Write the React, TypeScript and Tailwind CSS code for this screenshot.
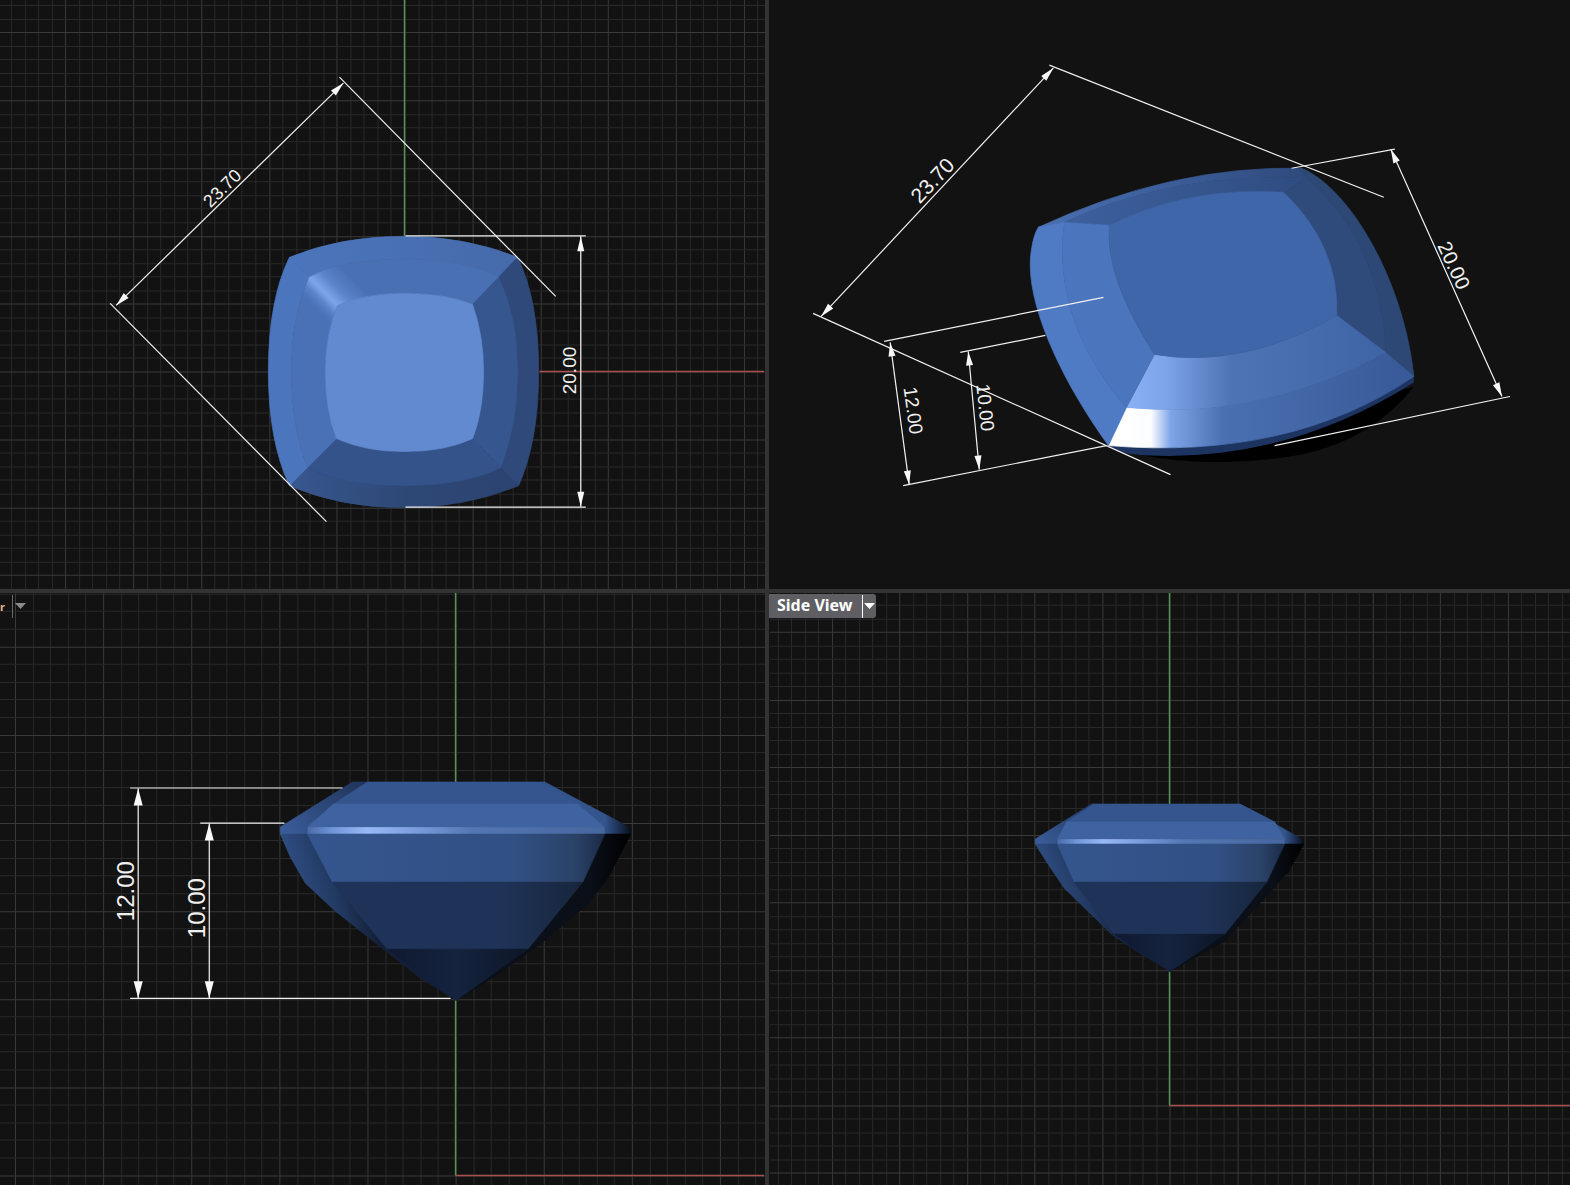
import React from "react";

type P = [number, number];
const pts = (a: P[]) => a.map((p) => p.join(",")).join(" ");
const SCALE = "scale(1.0013)";

function F({ d, fill }: { d: string; fill: string }) {
  return <path d={d} fill={fill} stroke={fill} strokeWidth={0.7} strokeLinejoin="round" />;
}

function Pg({ p, fill }: { p: P[]; fill: string }) {
  return <polygon points={pts(p)} fill={fill} stroke={fill} strokeWidth={0.7} strokeLinejoin="round" />;
}

function Grid({ ox, oy, step, x0, x1, y0, y1 }: { ox: number; oy: number; step: number; x0: number; x1: number; y0: number; y1: number }) {
  const lines: React.ReactNode[] = [];
  const s = Math.ceil((ox - x0) / step);
  for (let i = -s; ox + i * step <= x1; i++) {
    const x = Math.round(ox + i * step) + 0.5;
    lines.push(<line key={"v" + i} x1={x} y1={y0} x2={x} y2={y1} stroke={i % 5 === 0 ? "#3a3a3a" : "#292929"} strokeWidth={1} />);
  }
  const t = Math.ceil((oy - y0) / step);
  for (let j = -t; oy + j * step <= y1; j++) {
    const y = Math.round(oy + j * step) + 0.5;
    lines.push(<line key={"h" + j} x1={x0} y1={y} x2={x1} y2={y} stroke={j % 5 === 0 ? "#3a3a3a" : "#292929"} strokeWidth={1} />);
  }
  return <g>{lines}</g>;
}

function Dim({ a, b, len = 15, w = 8 }: { a: P; b: P; len?: number; w?: number }) {
  const dx = b[0] - a[0];
  const dy = b[1] - a[1];
  const d = Math.hypot(dx, dy);
  const ux = dx / d;
  const uy = dy / d;
  const head = (p: P, s: number): P[] => [
    p,
    [p[0] + s * ux * len - (uy * w) / 2, p[1] + s * uy * len + (ux * w) / 2],
    [p[0] + s * ux * len + (uy * w) / 2, p[1] + s * uy * len - (ux * w) / 2],
  ];
  return (
    <g>
      <line x1={a[0]} y1={a[1]} x2={b[0]} y2={b[1]} stroke="#f2f2f2" strokeWidth={1.2} />
      <polygon points={pts(head(a, 1))} fill="#f8f8f8" />
      <polygon points={pts(head(b, -1))} fill="#f8f8f8" />
    </g>
  );
}

function Ext({ a, b }: { a: P; b: P }) {
  return <line x1={a[0]} y1={a[1]} x2={b[0]} y2={b[1]} stroke="#f0f0f0" strokeWidth={1.2} />;
}

function Label({ x, y, r, size = 18, children }: { x: number; y: number; r: number; size?: number; children: string }) {
  return (
    <text
      transform={`translate(${x} ${y}) rotate(${r})`}
      textAnchor="middle"
      dominantBaseline="central"
      fontSize={size}
      fill="#f0f0f0"
      fontFamily='"Liberation Sans", Arial, sans-serif'
    >
      {children}
    </text>
  );
}

function Stops({ id, x1, y1, x2, y2, stops }: { id: string; x1: number; y1: number; x2: number; y2: number; stops: [number, string][] }) {
  return (
    <linearGradient id={id} gradientUnits="userSpaceOnUse" x1={x1} y1={y1} x2={x2} y2={y2}>
      {stops.map(([o, c]) => (
        <stop key={o} offset={o} stopColor={c} />
      ))}
    </linearGradient>
  );
}

function TopGem() {
  return (
    <g>
      <defs>
        <Stops id="tlRingTop" x1={323} y1={291} x2={344} y2={270} stops={[[0, "#7ea6ea"], [0.4, "#5c84ca"], [1, "#4a70b4"]]} />
        <Stops id="tlRingLeft" x1={323} y1={291} x2={311} y2={303} stops={[[0, "#7ea6ea"], [0.5, "#5a82c8"], [1, "#4a71b6"]]} />
        <Stops id="tlOuterBottom" x1={290} y1={0} x2={518} y2={0} stops={[[0, "#38578f"], [0.5, "#2e4876"], [1, "#2b4370"]]} />
        <Stops id="tlOuterTop" x1={290} y1={0} x2={518} y2={0} stops={[[0, "#4b75bc"], [1, "#466aaa"]]} />
      </defs>
      <F d="M289,257 Q340,236 403,236 Q465,236 517,257 L498,277 Q465,259 403,259 Q340,259 309,277Z" fill="url(#tlOuterTop)" />
      <F d="M517,257 Q538,300 538,371 Q538,440 518,485 L500,467 Q517,425 517,371 Q517,315 498,277Z" fill="#2f4a7a" />
      <F d="M518,485 Q465,507 403,507 Q340,507 289,485 L307,467 Q340,485 403,485 Q465,485 500,467Z" fill="url(#tlOuterBottom)" />
      <F d="M289,485 Q268,440 268,371 Q268,300 289,257 L309,277 Q291,315 291,371 Q291,425 307,467Z" fill="#4b75bc" />
      <F d="M309,277 Q340,259 403,259 Q465,259 498,277 L472,304 Q445,293 403,293 Q365,293 337,305Z" fill="url(#tlRingTop)" />
      <F d="M498,277 Q517,315 517,371 Q517,425 500,467 L472,438 Q483,410 483,371 Q483,335 472,304Z" fill="#36568f" />
      <F d="M500,467 Q465,485 403,485 Q340,485 307,467 L336,438 Q365,451 403,451 Q445,451 472,438Z" fill="#35538b" />
      <F d="M307,467 Q291,425 291,371 Q291,315 309,277 L337,305 Q325,335 325,371 Q325,410 336,438Z" fill="url(#tlRingLeft)" />
      <F d="M337,305 Q365,293 403,293 Q445,293 472,304 Q483,335 483,371 Q483,410 472,438 Q445,451 403,451 Q365,451 336,438 Q325,410 325,371 Q325,335 337,305Z" fill="#628ad0" />
    </g>
  );
}

function PerspGem() {
  return (
    <g>
      <defs>
        <Stops id="trOuterBottom" x1={1125} y1={0} x2={1400} y2={0} stops={[[0, "#ffffff"], [0.09, "#fafcff"], [0.16, "#7fa5e8"], [0.35, "#4a70b2"], [1, "#395a98"]]} />
        <Stops id="trRingBottom" x1={1125} y1={0} x2={1385} y2={0} stops={[[0, "#8ab0f5"], [0.15, "#7ea4e8"], [0.4, "#4e74b6"], [1, "#3f64a6"]]} />
        <Stops id="trOuterTop" x1={1037} y1={0} x2={1303} y2={0} stops={[[0, "#4a70b2"], [0.5, "#3b5d99"], [1, "#2f4a7c"]]} />
        <Stops id="trRingTop" x1={1063} y1={0} x2={1307} y2={0} stops={[[0, "#3d609e"], [1, "#2f4c80"]]} />
      </defs>
      <path d="M1125,452 Q1210,470 1300,454 Q1372,438 1412,386 L1300,420 Z" fill="#000000" />
      <path d="M1107,445 Q1115,454 1150,455 Q1288,460 1412,382 L1412,372 L1280,420 Z" fill="#1d3360" />
      <F d="M1037,227 Q1170,165 1300,168 L1305,178 Q1170,172 1063,222Z" fill="url(#trOuterTop)" />
      <F d="M1300,168 C1348,188 1402,280 1412,376 L1384,352 Q1378,240 1305,178Z" fill="#2e4876" />
      <F d="M1412,376 Q1288,460 1107,445 L1125,407 Q1260,420 1384,352Z" fill="url(#trOuterBottom)" />
      <F d="M1107,445 C1060,380 1022,300 1030,250 Q1032,235 1037,227 L1063,222 Q1050,320 1125,407Z" fill="#4f7bc4" />
      <F d="M1063,222 Q1170,172 1305,178 L1282,192 Q1185,186 1108,225Z" fill="url(#trRingTop)" />
      <F d="M1305,178 Q1378,240 1384,352 L1335,315 Q1338,246 1282,192Z" fill="#2f4b7b" />
      <F d="M1384,352 Q1260,420 1125,407 L1153,354 Q1242,369 1335,315Z" fill="url(#trRingBottom)" />
      <F d="M1125,407 Q1050,320 1063,222 L1108,225 Q1103,276 1153,354Z" fill="#4b76bd" />
      <F d="M1108,225 Q1185,186 1282,192 Q1338,246 1335,315 Q1242,369 1153,354 Q1103,276 1108,225Z" fill="#3f66a8" />
    </g>
  );
}

type SideP = {
  id: string; yTop: number; y1: number; y2: number; y3: number; y4: number; y5: number;
  apex: P; silTL: number; silTR: number; topL: number; topR: number; x1L: number; x1R: number;
  x2L: number; x2R: number; x4L: number; x4R: number; x5L: number; x5R: number;
  gL: number; gR: number; silL: P[]; silR: P[];
};

function SideGem({ p }: { p: SideP }) {
  const { id } = p;
  const w = p.x2R - p.x2L;
  return (
    <g>
      <defs>
        <Stops id={id + "strip"} x1={p.x2L} y1={0} x2={p.x2R} y2={0} stops={[[0, "#486aa6"], [0.08, "#6f94d8"], [0.2, "#98b9f6"], [0.35, "#7d9fe0"], [0.55, "#5478b4"], [1, "#46669f"]]} />
        <Stops id={id + "pav1"} x1={p.x2L} y1={0} x2={p.x2R} y2={0} stops={[[0, "#35558e"], [0.7, "#315084"], [0.9, "#2b4268"], [1, "#1a2a46"]]} />
        <Stops id={id + "pav2"} x1={p.x2L} y1={0} x2={p.x2R} y2={0} stops={[[0, "#1f3358"], [0.65, "#1f3358"], [0.9, "#18273f"], [1, "#0e1828"]]} />
        <Stops id={id + "pav3"} x1={p.x5L} y1={0} x2={p.x5R} y2={0} stops={[[0, "#0f1930"], [0.5, "#15233f"], [1, "#0d1626"]]} />
        <Stops id={id + "cL"} x1={p.silTL} y1={p.yTop} x2={p.gL} y2={p.y3} stops={[[0, "#22375f"], [1, "#3a5e9c"]]} />
        <Stops id={id + "cR"} x1={p.x2R} y1={0} x2={p.gR} y2={0} stops={[[0, "#34548c"], [0.5, "#1e3358"], [1, "#090e18"]]} />
        <Stops id={id + "pL"} x1={p.gL} y1={p.y3} x2={p.x2L + 0.12 * w} y2={p.y3 - 18} stops={[[0, "#2f4d82"], [0.55, "#223a62"], [1, "#131f38"]]} />
        <Stops id={id + "pR"} x1={p.x2R - 0.05 * w} y1={0} x2={p.gR} y2={0} stops={[[0, "#0a0f18"], [1, "#000000"]]} />
      </defs>
      <Pg fill={`url(#${id}cL)`} p={[[p.silTL, p.yTop], [p.topL, p.yTop], [p.x1L, p.y1], [p.x2L, p.y2], [p.x2L, p.y3], [p.gL, p.y3], [p.gL, p.y2]]} />
      <Pg fill={`url(#${id}cR)`} p={[[p.topR, p.yTop], [p.silTR, p.yTop], [p.gR, p.y2 + 1], [p.gR, p.y3], [p.x2R, p.y3], [p.x2R, p.y2], [p.x1R, p.y1]]} />
      <Pg fill={`url(#${id}pL)`} p={[[p.gL, p.y3], [p.x2L, p.y3], [p.x4L, p.y4], [p.x5L, p.y5], p.apex, ...p.silL]} />
      <Pg fill={`url(#${id}pR)`} p={[[p.x2R, p.y3], [p.gR, p.y3], ...p.silR, p.apex, [p.x5R, p.y5], [p.x4R, p.y4]]} />
      <Pg fill="#35558e" p={[[p.topL, p.yTop], [p.topR, p.yTop], [p.x1R, p.y1], [p.x1L, p.y1]]} />
      <Pg fill="#3f63a0" p={[[p.x1L, p.y1], [p.x1R, p.y1], [p.x2R, p.y2], [p.x2L, p.y2]]} />
      <rect fill={`url(#${id}strip)`} x={p.x2L} y={p.y2} width={w} height={p.y3 - p.y2} />
      <Pg fill={`url(#${id}pav1)`} p={[[p.x2L, p.y3], [p.x2R, p.y3], [p.x4R, p.y4], [p.x4L, p.y4]]} />
      <Pg fill={`url(#${id}pav2)`} p={[[p.x4L, p.y4], [p.x4R, p.y4], [p.x5R, p.y5], [p.x5L, p.y5]]} />
      <Pg fill={`url(#${id}pav3)`} p={[[p.x5L, p.y5], [p.x5R, p.y5], p.apex]} />
    </g>
  );
}

const bigGem: SideP = {
  id: "bl", yTop: 781, y1: 803, y2: 826, y3: 833, y4: 881, y5: 948, apex: [455.5, 999],
  silTL: 352, silTR: 544, topL: 367, topR: 543, x1L: 333, x1R: 577, x2L: 307, x2R: 604,
  x4L: 332, x4R: 582, x5L: 387, x5R: 527, gL: 280, gR: 630,
  silL: [[420, 977], [383, 948], [335, 910], [305, 882], [290, 856]],
  silR: [[607, 877], [587, 903], [543, 940], [527, 952], [487, 980]],
};

const smallGem: SideP = {
  id: "br", yTop: 803, y1: 821, y2: 838, y3: 843, y4: 881, y5: 933, apex: [1168.5, 970],
  silTL: 1090, silTR: 1238, topL: 1092, topR: 1238, x1L: 1065, x1R: 1273, x2L: 1056, x2R: 1283,
  x4L: 1073, x4R: 1265, x5L: 1113, x5R: 1223, gL: 1034, gR: 1302,
  silL: [[1135, 950], [1110, 933], [1063, 887], [1046, 862]],
  silR: [[1287, 870], [1263, 897], [1223, 940], [1200, 953]],
};

const ARROW = (
  <svg width="11" height="7" viewBox="0 0 11 7" className="block">
    <polygon points="0,0 11,0 5.5,6" fill="currentColor" />
  </svg>
);

export default function App() {
  return (
    <div className="grid h-[1185px] w-[1570px] grid-cols-[765px_801px] grid-rows-[589px_592px] gap-[4px] overflow-hidden bg-[#333333]">
      <section className="relative overflow-hidden bg-[#121212]">
        <svg viewBox="0 0 765 589" className="block h-full w-full">
          <g transform={SCALE}>
            <Grid ox={404} oy={371} step={13.55} x0={0} x1={764} y0={0} y1={589} />
            <line x1={404} y1={0} x2={404} y2={236} stroke="#559455" strokeWidth={1.5} />
            <line x1={539} y1={371} x2={763} y2={371} stroke="#a85050" strokeWidth={1.5} />
            <TopGem />
            <Ext a={[339, 77]} b={[555, 296]} />
            <Ext a={[110, 303]} b={[326, 521]} />
            <Ext a={[405, 235.5]} b={[585, 235.5]} />
            <Ext a={[405, 506.5]} b={[585, 506.5]} />
            <Dim a={[116, 305]} b={[343, 83]} len={14} w={7} />
            <Dim a={[580, 236]} b={[580, 506]} len={15} w={7} />
            <Label x={222} y={188} r={-45} size={18}>23.70</Label>
            <Label x={569} y={370} r={-90} size={19}>20.00</Label>
          </g>
        </svg>
      </section>

      <section className="relative overflow-hidden bg-[#121212]">
        <svg viewBox="769 0 801 589" className="block h-full w-full">
          <g transform={SCALE}>
            <PerspGem />
            <Ext a={[1048, 65]} b={[1382, 197]} />
            <Ext a={[812, 313]} b={[1169, 474]} />
            <Ext a={[1290, 168]} b={[1393, 149]} />
            <Ext a={[1273, 445]} b={[1508, 396]} />
            <Ext a={[883, 341]} b={[1102, 297]} />
            <Ext a={[959, 352]} b={[1044, 335]} />
            <Ext a={[902, 485]} b={[1105, 445]} />
            <Dim a={[820, 316]} b={[1052, 68]} len={14} w={7} />
            <Dim a={[1389, 149]} b={[1500, 396]} len={14} w={7} />
            <Dim a={[889, 342]} b={[908, 484]} len={14} w={7} />
            <Dim a={[967, 351]} b={[978, 469]} len={14} w={7} />
            <Label x={931} y={180} r={-47} size={21}>23.70</Label>
            <Label x={1452} y={265} r={65} size={20}>20.00</Label>
            <Label x={912} y={410} r={82} size={19}>12.00</Label>
            <Label x={984} y={407} r={84} size={19}>10.00</Label>
          </g>
        </svg>
      </section>

      <section className="relative overflow-hidden bg-[#121212]">
        <svg viewBox="0 593 765 592" className="block h-full w-full">
          <g transform={SCALE}>
            <Grid ox={455} oy={1173.5} step={17.6} x0={0} x1={764} y0={590} y1={1185} />
            <line x1={455} y1={590} x2={455} y2={781} stroke="#559455" strokeWidth={1.5} />
            <line x1={455} y1={998} x2={455} y2={1174} stroke="#559455" strokeWidth={1.5} />
            <line x1={455} y1={1174} x2={763} y2={1174} stroke="#a85050" strokeWidth={1.5} />
            <SideGem p={bigGem} />
            <Ext a={[130, 787]} b={[342, 787]} />
            <Ext a={[200, 822]} b={[284, 822]} />
            <Ext a={[130, 997]} b={[450, 997]} />
            <Dim a={[138, 787.5]} b={[138, 997]} len={17} w={9} />
            <Dim a={[209, 822.5]} b={[209, 997]} len={17} w={9} />
            <Label x={125} y={890} r={-90} size={24}>12.00</Label>
            <Label x={196} y={907} r={-90} size={24}>10.00</Label>
          </g>
        </svg>
        <div className="absolute left-0 top-[1px] flex h-[24px] items-center">
          <span className="w-[5px] font-['Noto_Sans',sans-serif] text-[11px] font-bold leading-none text-[#e8b48a]">r</span>
          <span className="ml-[7px] h-[23px] w-px bg-[#6a6a6a]" />
          <span className="ml-[2px] text-[#8a8a8a]">{ARROW}</span>
        </div>
      </section>

      <section className="relative overflow-hidden bg-[#121212]">
        <svg viewBox="769 593 801 592" className="block h-full w-full">
          <g transform={SCALE}>
            <Grid ox={1168} oy={1103.5} step={13.5} x0={769} x1={1570} y0={590} y1={1185} />
            <line x1={1168} y1={590} x2={1168} y2={803} stroke="#559455" strokeWidth={1.5} />
            <line x1={1168} y1={970} x2={1168} y2={1104} stroke="#559455" strokeWidth={1.5} />
            <line x1={1168} y1={1104} x2={1570} y2={1104} stroke="#a85050" strokeWidth={1.5} />
            <SideGem p={smallGem} />
          </g>
        </svg>
        <div className="absolute left-0 top-[1px] flex h-[24px] w-[107px] items-center rounded-br-[3px] rounded-tr-[3px] bg-[#5f5f63] pl-[8px]">
          <span className="w-[85px] -translate-y-px font-['Noto_Sans',sans-serif] text-[16px] font-bold leading-none text-white">Side View</span>
          <span className="h-[23px] w-px bg-white" />
          <span className="ml-[1px] text-white">{ARROW}</span>
        </div>
      </section>
    </div>
  );
}
